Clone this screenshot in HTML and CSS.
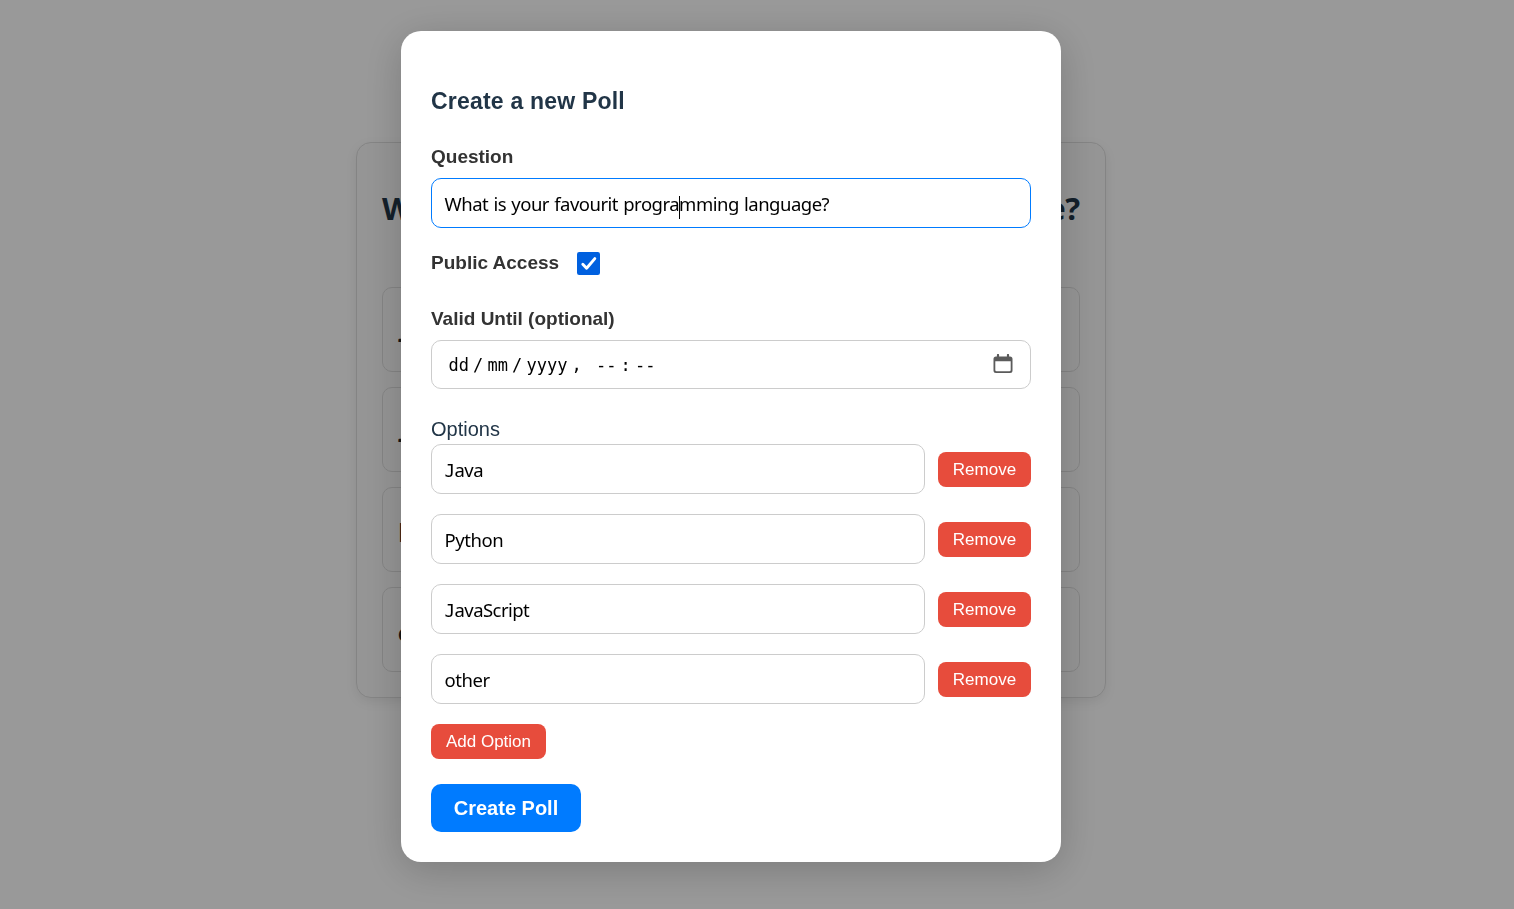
FILE: index.html
```html
<!DOCTYPE html>
<html lang="en">
<head>
<meta charset="utf-8">
<title>Create a new Poll</title>
<link rel="stylesheet" href="styles.css">
</head>
<body>
<main class="page">
  <section class="poll">
    <h1 class="poll-title">What is your favourit programming language?</h1>
    <div class="poll-options">
      <div class="poll-option">Java</div>
      <div class="poll-option">JavaScript</div>
      <div class="poll-option">Python</div>
      <div class="poll-option">other</div>
    </div>
  </section>
</main>
<div class="overlay">
  <form class="modal">
    <h2 class="modal-title">Create a new Poll</h2>
    <div class="label">Question</div>
    <div class="field field-focus"><span class="question">What is your favourit progra<i class="caret"></i>mming language?</span></div>
    <div class="access">
      <span class="label">Public Access</span>
      <svg class="check" viewBox="0 0 23 23"><rect width="23" height="23" rx="2.2" fill="#0060df"/><path d="M5.8 12.2 9.6 16.2 17.8 6.6" fill="none" stroke="#fff" stroke-width="2.9" stroke-linecap="round" stroke-linejoin="round"/></svg>
    </div>
    <div class="label">Valid Until (optional)</div>
    <div class="field date">
      <span>dd</span><span class="sep">/</span><span>mm</span><span class="sep">/</span><span>yyyy</span><span class="sep comma">,</span><span class="dash">--</span><span class="sep">:</span><span class="dash">--</span>
      <svg class="calendar" viewBox="0 0 20 20"><path d="M3 2.500h14a2.500 2.500 0 0 1 2.500 2.500v11.500a2.500 2.500 0 0 1-2.500 2.500H3A2.500 2.500 0 0 1 .5 16.500V5A2.500 2.500 0 0 1 3 2.500ZM2.300 7.200V16a1.300 1.300 0 0 0 1.300 1.300h12.800A1.300 1.300 0 0 0 17.700 16V7.200Z" fill="#5b5b5b" fill-rule="evenodd"/><path d="M5 1v3M15 1v3" stroke="#5b5b5b" stroke-width="2.200" stroke-linecap="round"/></svg>
    </div>
    <div class="options-label">Options</div>
    <div class="options">
      <div class="row"><div class="field"><span class="value initial-j">Java</span></div><button type="button" class="small">Remove</button></div>
      <div class="row"><div class="field"><span class="value">Python</span></div><button type="button" class="small">Remove</button></div>
      <div class="row"><div class="field"><span class="value initial-j">JavaScript</span></div><button type="button" class="small">Remove</button></div>
      <div class="row"><div class="field"><span class="value">other</span></div><button type="button" class="small">Remove</button></div>
    </div>
    <button type="button" class="small add">Add Option</button>
    <button type="button" class="create">Create Poll</button>
  </form>
</div>
</body>
</html>
```
FILE: styles.css
```css
* { box-sizing: border-box; }
body {
  margin: 0;
  height: 909px;
  overflow: hidden;
  background: #fff;
  font-family: "Liberation Sans", Arial, sans-serif;
}
.page {
  width: 750px;
  margin-left: 356px;
  padding-top: 142px;
}
.poll {
  height: 556px;
  padding: 43px 25px 25px;
  border: 1px solid #ddd;
  border-radius: 15px;
  background: #f9f9f9;
  box-shadow: 0 4px 12px rgba(0, 0, 0, .08);
}
.poll-title {
  height: 44px;
  margin: 0 0 57px;
  color: #213547;
  font: 700 31px/44px "Noto Sans", sans-serif;
  letter-spacing: -.4px;
  white-space: nowrap;
}
.poll-options { display: grid; gap: 15px; }
.poll-option {
  height: 85px;
  padding: 25px 15px;
  border: 1px solid #ddd;
  border-radius: 10px;
  color: #222;
  font: 700 27px/38px Lato, sans-serif;
}
.overlay {
  position: fixed;
  inset: 0;
  display: flex;
  align-items: flex-start;
  padding: 31px 0 0 401px;
  background: rgba(0, 0, 0, .4);
}
.modal {
  width: 660px;
  height: 831px;
  padding: 54px 30px 30px;
  border-radius: 20px;
  background: #fff;
  box-shadow: 0 8px 40px rgba(0, 0, 0, .2);
}
.modal-title {
  margin: 0 0 26px;
  color: #213547;
  font-size: 23px;
  line-height: 32px;
  letter-spacing: .2px;
}
.label {
  height: 24px;
  color: #333;
  font-size: 19px;
  font-weight: 700;
  line-height: 27px;
}
.field {
  display: flex;
  align-items: center;
  height: 50px;
  margin-top: 11px;
  padding: 2px 12.500px 0;
  border: 1px solid #ccc;
  border-radius: 10px;
  color: #000;
  font: 18.500px/22px "Noto Sans", sans-serif;
  white-space: pre;
}
.field-focus { border-color: #007bff; }
.question { letter-spacing: -.5px; word-spacing: .9px; }
.caret {
  display: inline-block;
  width: 1px;
  height: 23px;
  margin: -3px -1px -3px 0;
  background: #000;
  vertical-align: -5px;
}
.access {
  display: flex;
  gap: 18px;
  height: 24px;
  margin: 21px 0 32px;
}
.check { width: 23px; height: 23px; margin-top: 3px; }
.date {
  height: 49px;
  padding: 0 17px 0 16.500px;
  font: 17px/24px "DejaVu Sans Mono", monospace;
}
.sep { width: 18.500px; text-align: center; }
.comma { width: 28.500px; padding-right: 10px; }
.calendar { width: 20px; height: 20px; margin-left: auto; margin-bottom: 2px; }
.options-label {
  margin: 28px 0 3px;
  color: #213547;
  font-size: 20px;
  line-height: 24px;
}
.options { display: grid; gap: 20px; }
.row { display: flex; align-items: center; gap: 13px; }
.row .field { flex: 1; margin: 0; }
.value { display: block; letter-spacing: -.45px; }
.initial-j { letter-spacing: -.55px; }
.initial-j::first-letter { font-family: "DejaVu Sans Mono", monospace; font-size: 17.500px; }
button { border: 0; color: #fff; font-family: inherit; padding: 0; }
.small {
  width: 93px;
  height: 35px;
  border-radius: 8px;
  background: #e74c3c;
  font-size: 17px;
}
.row .small { padding-top: 1px; }
.add { display: block; width: 115px; margin: 20px 0 25px; }
.create {
  width: 150px;
  height: 48px;
  border-radius: 10px;
  background: #007bff;
  font-size: 20px;
  font-weight: 700;
}
```
